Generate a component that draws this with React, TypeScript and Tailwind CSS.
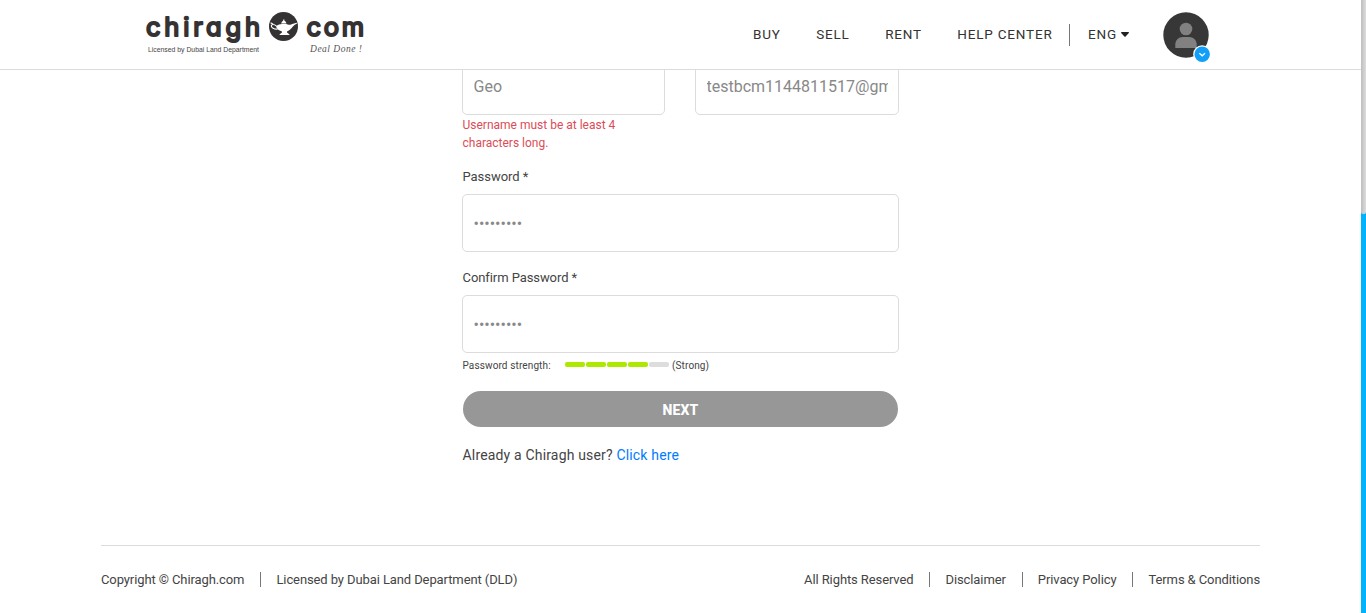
import React from 'react';

const navItems = [
  { label: 'BUY', gap: 'mr-[35.500px]' },
  { label: 'SELL', gap: 'mr-[35.500px]' },
  { label: 'RENT', gap: 'mr-[35.500px]' },
  { label: 'HELP CENTER', gap: '' },
];

const fieldClass =
  'block h-[58px] w-full rounded-[5px] border border-[#dcdcdc] bg-white px-[10.5px] text-[16px] text-[#888] outline-none';

function Logo() {
  return (
    <svg width="222" height="48" viewBox="0 0 222 48" className="block">
      <g
        fill="#353233"
        stroke="#353233"
        strokeWidth="2"
        strokeLinejoin="round"
        fontFamily="Inter, sans-serif"
        fontSize="25.5"
        fontWeight="400"
        className="[font-feature-settings:'cv11']"
      >
        <text x="2" y="27.500" textLength="114">chiragh</text>
        <text x="162.500" y="27.500" textLength="57.500">com</text>
      </g>
      <circle cx="139.5" cy="18.5" r="14.5" fill="#353233" />
      <g fill="#fff">
        <path d="M132 18c2-1.200 4-1.900 6-2h4c1.600.2 2.800 1.200 4.400.7 2.800-.9 4.500-2 7.200-2-.7 1.200-2 1.400-3.200 2.400-2 1.700-3.200 4.700-7.400 6.300v1.200c.8.8 1.800 1.200 2.800 2.400h-10.600c1-1.200 2-1.600 2.800-2.400v-1.200c-3.400-.9-5.500-2.500-6-5.400z" />
        <path d="M137.200 15.400c.3-1.500 1-2 2-2.600v-1.300h1.200v1.300c1.100.6 1.700 1.100 2 2.600z" />
      </g>
      <path d="M133.500 21.200c-3.500.2-6.300-1.500-6.200-3.300.1-1.700 2.700-2 5 0M126.600 14.700l2.600 1.500" fill="none" stroke="#fff" strokeWidth="1.200" />
      <text x="4" y="43.500" textLength="111" lengthAdjust="spacingAndGlyphs" fontFamily="Liberation Sans, sans-serif" fontSize="7.600" fill="#444">
        Licensed by Dubai Land Department
      </text>
      <text x="166" y="43.500" textLength="52" fontFamily="Liberation Serif, serif" fontStyle="italic" fontSize="9.500" fill="#555">
        Deal Done !
      </text>
    </svg>
  );
}

function Avatar() {
  return (
    <svg width="48" height="52" viewBox="0 0 48 52" className="block">
      <circle cx="23" cy="23" r="22.700" fill="#373737" />
      <circle cx="23" cy="17" r="6.300" fill="#818181" />
      <path d="M12.300 36v-3.500c0-4.500 3.500-7.500 7.500-7.500h6.400c4 0 7.500 3 7.500 7.500V36z" fill="#818181" />
      <circle cx="39.200" cy="42.200" r="9" fill="#fff" />
      <circle cx="39.200" cy="42.200" r="7.700" fill="#139ff7" />
      <path d="M36.400 41.200l2.800 2.600 2.800-2.600" fill="none" stroke="#fff" strokeWidth="1.300" />
    </svg>
  );
}

function Header() {
  return (
    <header className="flex h-[70px] shrink-0 items-start border-b border-[#dcdcdc] bg-white pl-36">
      <div className="w-[609px] pt-2"><Logo /></div>
      <nav className="mt-6 flex h-[22px] w-[377px] items-center justify-between text-[13.500px] leading-[20px] tracking-[0.8px] text-[#333]">
        <div className="flex w-[316px]">
          {navItems.map((item) => (
            <a key={item.label} className={`${item.gap} whitespace-nowrap pb-[2px]`}>{item.label}</a>
          ))}
        </div>
        <div className="flex w-[61px] items-center">
          <span className="h-[22px] w-px bg-[#777]" />
          <span className="ml-[18px] pb-[2px]">ENG</span>
          <svg width="8" height="5" viewBox="0 0 8 5" className="ml-1 -mt-px shrink-0">
            <path d="M0.500 0h7q.7.300.3.900L4.600 4.600q-.6.500-1.200 0L.2.900Q-.2.300.5 0z" fill="#222" />
          </svg>
        </div>
      </nav>
      <div className="ml-[33px] pt-3"><Avatar /></div>
    </header>
  );
}

function SignUpForm() {
  return (
    <form className="ml-[462px] w-[437px] -mt-[13px]">
      <div className="flex justify-between">
        <div className="w-[203px]">
          <input className={fieldClass} defaultValue="Geo" />
          <p className="mt-px pl-[0.5px] text-[12px] leading-[18px] text-[#dc4c58]">
            Username must be at least 4<br />characters long.
          </p>
        </div>
        <div className="w-[204px]">
          <input className={fieldClass} defaultValue="testbcm1144811517@gmail.com" />
        </div>
      </div>
      <label className="mt-[15px] mb-[7px] block pl-[0.5px] text-[13px] leading-5 tracking-[-0.05px]">Password *</label>
      <input type="password" className={fieldClass} defaultValue="password1" />
      <label className="mt-4 mb-[7px] block pl-[0.5px] text-[13px] leading-5 tracking-[-0.08px]">Confirm Password *</label>
      <input type="password" className={fieldClass} defaultValue="password1" />
      <div className="mt-[5px] flex h-4 items-center text-[10px] leading-4 tracking-[0.12px]">
        <span className="w-[103px] pl-[0.5px]">Password strength:</span>
        <div className="mb-[3px] flex gap-px">
          <span className="h-[5px] w-5 rounded-[2px] bg-[#ade800]" />
          <span className="h-[5px] w-5 rounded-[2px] bg-[#ade800]" />
          <span className="h-[5px] w-5 rounded-[2px] bg-[#ade800]" />
          <span className="h-[5px] w-5 rounded-[2px] bg-[#ade800]" />
          <span className="h-[5px] w-5 rounded-[2px] bg-[#ddd]" />
        </div>
        <span className="ml-[3px]">(Strong)</span>
      </div>
      <button type="button" className="mx-px mt-[17px] block h-9 w-[435px] rounded-full bg-[#979797] pt-0.5 text-[14px] font-extrabold tracking-[0.1px] text-white">
        NEXT
      </button>
      <p className="mt-[18px] pl-[0.5px] text-[14px] leading-5 tracking-[0.17px]">
        Already a Chiragh user? <a className="text-[#007bff]">Click here</a>
      </p>
    </form>
  );
}

function Footer() {
  return (
    <footer className="ml-[101px] flex h-[68px] w-[1159px] shrink-0 items-center justify-between border-t border-[#dcdcdc] text-[13px] tracking-[-0.1px]">
      <div className="flex items-center">
        <span>Copyright © Chiragh.com</span>
        <span className="mr-[15px] ml-4 h-[15px] w-px bg-[#777]" />
        <span>Licensed by Dubai Land Department (DLD)</span>
      </div>
      <div className="flex items-center">
        <span>All Rights Reserved</span>
        <span className="mr-4 ml-[15px] h-[15px] w-px bg-[#777]" />
        <span>Disclaimer</span>
        <span className="mr-[15px] ml-4 h-[15px] w-px bg-[#777]" />
        <span>Privacy Policy</span>
        <span className="mr-[15px] ml-4 h-[15px] w-px bg-[#777]" />
        <span>Terms &amp; Conditions</span>
      </div>
    </footer>
  );
}

export default function App() {
  return (
    <div className="flex h-[613px] w-[1366px] overflow-hidden bg-white font-[Roboto,sans-serif] text-[#444]">
      <div className="flex w-[1361px] flex-col">
        <Header />
        <main className="flow-root h-[475px] shrink-0 overflow-hidden"><SignUpForm /></main>
        <Footer />
      </div>
      <div className="h-full w-[5px] bg-[#00b3ff]">
        <div className="h-[214px] rounded-b-[2px] bg-gradient-to-r from-[#bebebe] to-[#dcdcdc]" />
      </div>
    </div>
  );
}
